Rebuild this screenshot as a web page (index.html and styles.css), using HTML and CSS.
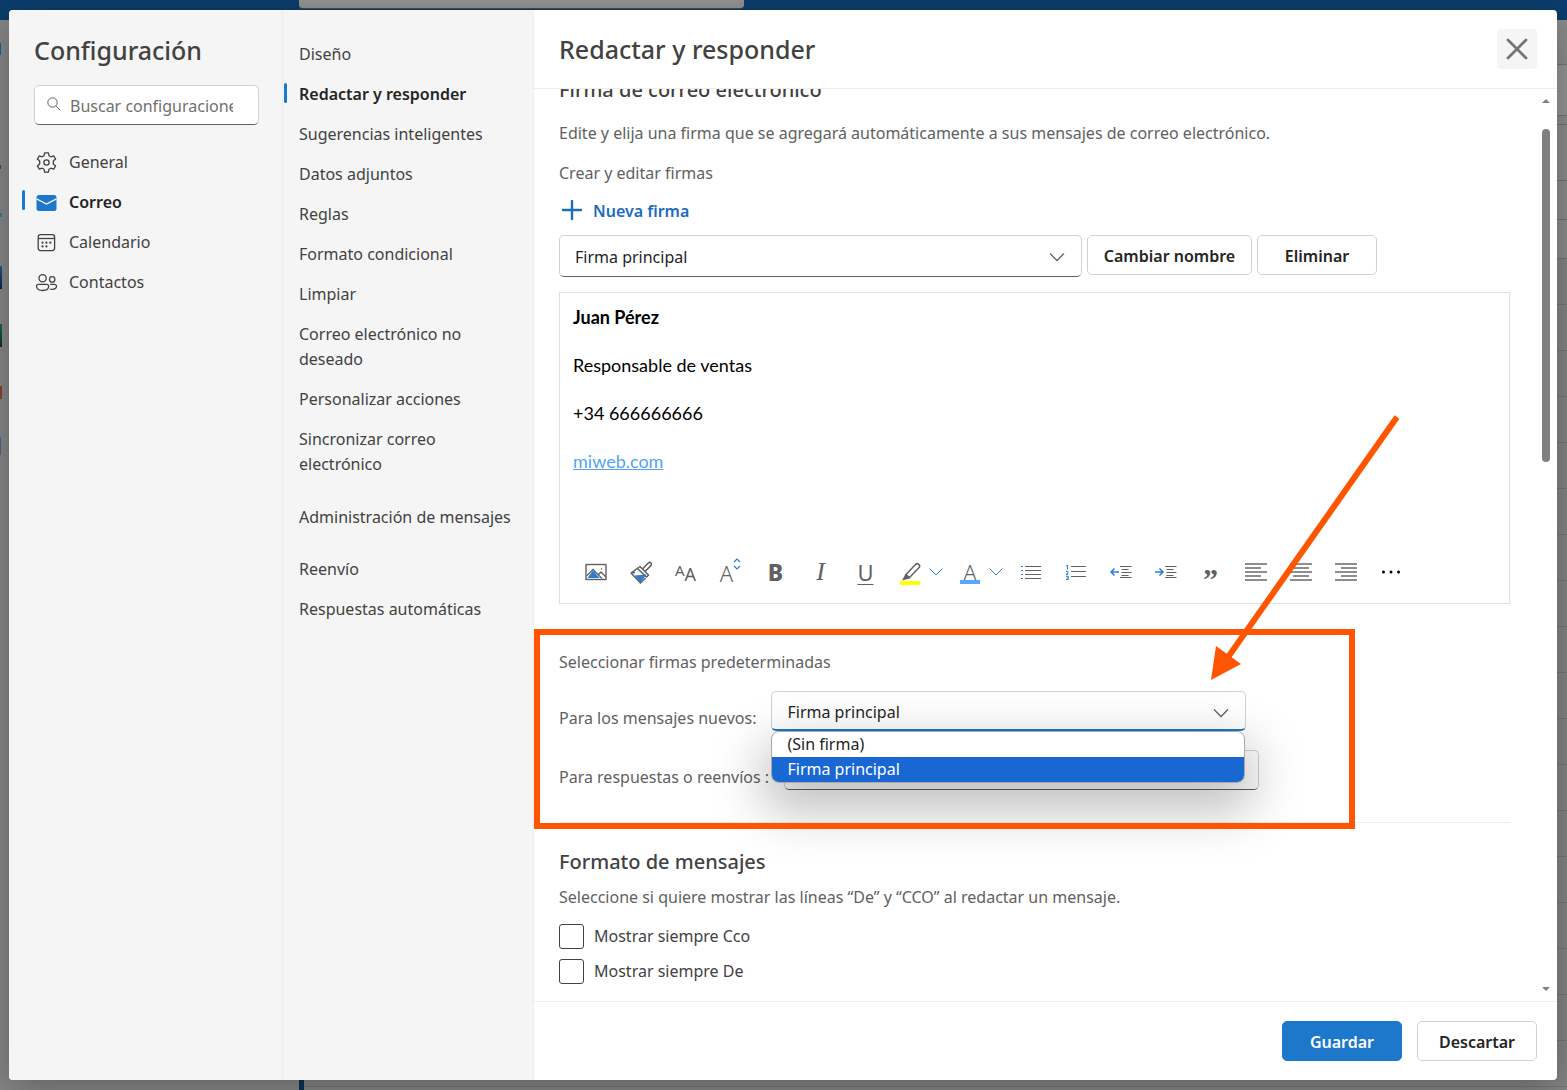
FILE: index.html
```html
<!DOCTYPE html>
<html lang="es">
<head>
<meta charset="utf-8">
<meta name="viewport" content="width=device-width, initial-scale=1">
<title>Configuración</title>
<link rel="stylesheet" href="styles.css">
</head>
<body>
<div class="shell" aria-hidden="true">
  <div class="topbar"><div class="topbar-search"></div></div>
  <div class="shell-body">
    <div class="rail">
      <i class="app mail"></i><i class="app dot"></i><i class="app dot-light"></i><i class="app word"></i><i class="app excel"></i><i class="app ppt"></i><i class="app todo"></i>
    </div>
    <div class="list-edge"><i class="selected"></i></div>
    <div class="reading">
      <div class="band tabs"></div><div class="band ribbon"></div><div class="band gap"></div>
      <div class="band head"></div><div class="band row"></div><div class="band row"></div>
      <div class="messages"></div>
    </div>
  </div>
</div>

<div class="dialog" role="dialog" aria-label="Configuración">
  <aside class="categories">
    <h1 class="title">Configuración</h1>
    <div class="search">
      <svg width="16" height="16" viewBox="0 0 16 16" fill="none" stroke="#616161"><circle cx="6.5" cy="5.5" r="4.7"/><path d="M10 9l4.200 4.200"/></svg>
      <input type="text" aria-label="Buscar configuraciones" placeholder="Buscar configuraciones">
    </div>
    <nav class="category-list" aria-label="Categorías">
      <a class="category" href="#general">
        <svg width="25" height="25" viewBox="0 0 25 25" fill="none" stroke="#424242" stroke-width="1.3" stroke-linejoin="round"><circle cx="12.5" cy="12.5" r="2.6"/><path d="M10.6 2.800h3.800l.6 3 1.800 1 2.900-1 1.900 3.300-2.300 2v2.800l2.300 2-1.900 3.300-2.900-1-1.800 1-.6 3h-3.800l-.6-3-1.800-1-2.900 1-1.900-3.300 2.300-2v-2.800l-2.300-2 1.900-3.300 2.900 1 1.800-1z"/></svg>
        General</a>
      <a class="category active" href="#correo" aria-current="page">
        <svg width="25" height="25" viewBox="0 0 25 25"><rect x="2.5" y="5" width="20" height="16" rx="2.5" fill="#1d78cb"/><path d="M2.5 8.800l10 5.200 10-5.200" fill="none" stroke="#f5f5f5" stroke-width="1.3"/></svg>
        Correo</a>
      <a class="category" href="#calendario">
        <svg width="25" height="25" viewBox="0 0 25 25" fill="none" stroke="#424242" stroke-width="1.3"><rect x="4.2" y="4.600" width="16.4" height="16" rx="2.5"/><path d="M4.2 8.500h16.4"/><g fill="#424242" stroke="none"><circle cx="8.5" cy="12.700" r="1.1"/><circle cx="12.4" cy="12.700" r="1.1"/><circle cx="16.3" cy="12.700" r="1.1"/><circle cx="8.5" cy="16.400" r="1.1"/><circle cx="12.4" cy="16.400" r="1.1"/></g></svg>
        Calendario</a>
      <a class="category" href="#contactos">
        <svg width="25" height="25" viewBox="0 0 25 25" fill="none" stroke="#424242" stroke-width="1.3"><circle cx="8.6" cy="8.300" r="3.6"/><circle cx="18.2" cy="9.400" r="2.7"/><path d="M4.5 14.300h8.200a2 2 0 0 1 2 2c0 2.800-2.600 4.200-6.100 4.200s-6.100-1.400-6.100-4.200a2 2 0 0 1 2-2zM16.200 14.300h4.300a2 2 0 0 1 2 2c0 1.900-1.900 3-4.500 3-.9 0-1.600-.1-2.300-.3"/></svg>
        Contactos</a>
    </nav>
  </aside>

  <nav class="sections" aria-label="Secciones de correo">
    <a class="section-link" href="#diseno">Diseño</a>
    <a class="section-link active" href="#redactar" aria-current="page">Redactar y responder</a>
    <a class="section-link" href="#sugerencias">Sugerencias inteligentes</a>
    <a class="section-link" href="#adjuntos">Datos adjuntos</a>
    <a class="section-link" href="#reglas">Reglas</a>
    <a class="section-link" href="#formato">Formato condicional</a>
    <a class="section-link" href="#limpiar">Limpiar</a>
    <a class="section-link" href="#no-deseado">Correo electrónico no deseado</a>
    <a class="section-link" href="#acciones">Personalizar acciones</a>
    <a class="section-link" href="#sincronizar">Sincronizar correo electrónico</a>
    <a class="section-link spaced" href="#administracion">Administración de mensajes</a>
    <a class="section-link" href="#reenvio">Reenvío</a>
    <a class="section-link" href="#respuestas">Respuestas automáticas</a>
  </nav>

  <main class="panel">
    <header class="panel-head">
      <h2 class="title">Redactar y responder</h2>
      <button class="close" type="button" aria-label="Cerrar"><svg width="24" height="24" viewBox="0 0 24 24" fill="none" stroke="#757575" stroke-width="2.800" stroke-linecap="round"><path d="M3 3l18 18M21 3L3 21"/></svg></button>
    </header>

    <div class="viewport">
      <div class="content">
        <section class="signature">
          <h3 class="subtitle clipped">Firma de correo electrónico</h3>
          <p class="text intro">Edite y elija una firma que se agregará automáticamente a sus mensajes de correo electrónico.</p>
          <p class="text">Crear y editar firmas</p>
          <button class="new" type="button"><svg width="22" height="22" viewBox="0 0 22 22" stroke="#1a6cbd" stroke-width="2.400" stroke-linecap="round"><path d="M11 1v18M2 10h18"/></svg>Nueva firma</button>
          <div class="picker">
            <div class="select-box main-select">
              <select aria-label="Firma"><option>Firma principal</option></select>
              <svg class="chevron" width="16" height="10" viewBox="0 0 16 10"><path d="M1 1.500l7 7 7-7"/></svg>
            </div>
            <button class="button rename" type="button">Cambiar nombre</button>
            <button class="button" type="button">Eliminar</button>
          </div>
          <div class="editor">
            <div class="editor-body">
              <p><b>Juan Pérez</b></p>
              <p>Responsable de ventas</p>
              <p>+34 666666666</p>
              <p><a href="#miweb">miweb.com</a></p>
            </div>
            <div class="toolbar" role="toolbar" aria-label="Formato">
              <button class="tool" type="button" aria-label="Imagen"><svg width="24" height="24" viewBox="0 0 24 24"><rect x="2" y="4.500" width="20" height="15" fill="none" stroke="#616161" stroke-width="1.400"/><path d="M3.500 18l5.500-7.500L15.500 18z" fill="#2b7cd3"/><path d="M3 15.500L9 9.500l9 9M14 15l3-3 5 5" fill="none" stroke="#616161" stroke-width="1.300"/><circle cx="17.500" cy="9" r=".8" fill="#616161"/></svg></button>
              <button class="tool" type="button" aria-label="Copiar formato"><svg width="24" height="24" viewBox="0 0 24 24" fill="none" stroke="#616161" stroke-width="1.500" stroke-linejoin="round"><path d="M5.500 15.500l12-1-6 8z" fill="#2b7cd3" stroke="none"/><path d="M2 13l9-6.500 8.500 8.500-8 8zM8.500 8.500L18 17.500M13.500 9l5.800-6a1.800 1.800 0 0 1 2.600 2.600L16 11.500M2 13l4-.5"/></svg></button>
              <button class="tool fonts" type="button" aria-label="Fuente"><span>A</span><span class="large">A</span></button>
              <button class="tool size" type="button" aria-label="Tamaño de fuente">A<svg width="8" height="12" viewBox="0 0 8 12" fill="none" stroke="#2b7cd3" stroke-width="1.200"><path d="M1 4l3-3 3 3M1 8l3 3 3-3"/></svg></button>
              <button class="tool bold" type="button" aria-label="Negrita">B</button>
              <button class="tool italic" type="button" aria-label="Cursiva">I</button>
              <button class="tool underline" type="button" aria-label="Subrayado">U</button>
              <span class="split">
                <button class="tool" type="button" aria-label="Resaltado"><svg width="24" height="26" viewBox="0 0 24 26"><path d="M2 22h20v4H2z" fill="#ff0"/><path d="M8 15.500L17.500 5.500a2.300 2.300 0 0 1 3.400 3.300L11.500 18.500z" fill="none" stroke="#616161" stroke-width="1.500"/><path d="M7.500 15l4.500 4.500-8 2z" fill="#616161"/></svg></button>
                <button class="more-arrow" type="button" aria-label="Color de resaltado"><svg width="14" height="8" viewBox="0 0 14 8" fill="none" stroke="#2b7cd3"><path d="M.500 .500l6.500 6.500 6.500-6.500"/></svg></button>
              </span>
              <span class="split">
                <button class="tool color" type="button" aria-label="Color de fuente">A</button>
                <button class="more-arrow" type="button" aria-label="Elegir color"><svg width="14" height="8" viewBox="0 0 14 8" fill="none" stroke="#2b7cd3"><path d="M.500 .500l6.500 6.500 6.500-6.500"/></svg></button>
              </span>
              <button class="tool" type="button" aria-label="Viñetas"><svg width="22" height="18" viewBox="0 0 22 18" stroke="#616161" stroke-width="1.200"><path d="M5 3.500h16M5 7.500h16M5 11.500h16M5 15.500h16"/><path d="M1 3.500h2M1 7.500h2M1 11.500h2M1 15.500h2" stroke="#2b7cd3"/></svg></button>
              <button class="tool" type="button" aria-label="Numeración"><svg width="22" height="18" viewBox="0 0 22 18" fill="none" stroke="#616161" stroke-width="1.200"><path d="M6 3.500h15M6 8.500h15M6 13.500h15"/><path d="M1 3l1.500-.7v4M1 8.300h2v1.500l-2 1.700h2.300M1 13.300h2.200v3.200H1M1.500 15h1.700" stroke="#2b7cd3" stroke-width="1"/></svg></button>
              <button class="tool" type="button" aria-label="Reducir sangría"><svg width="22" height="16" viewBox="0 0 22 16" fill="none" stroke="#616161" stroke-width="1.200"><path d="M10 2.500h11.500M11.500 5.500h7M11.500 8.500h10M11.500 11.500h7M10 13.500h11.500"/><path d="M9 8H1M4.500 4.500L1 8l3.500 3.500" stroke="#2b7cd3" stroke-width="1.500"/></svg></button>
              <button class="tool" type="button" aria-label="Aumentar sangría"><svg width="22" height="16" viewBox="0 0 22 16" fill="none" stroke="#616161" stroke-width="1.200"><path d="M10 2.500h11.500M11.500 5.500h7M11.500 8.500h10M11.500 11.500h7M10 13.500h11.500"/><path d="M0 8h8M4.500 4.500L8 8l-3.500 3.500" stroke="#2b7cd3" stroke-width="1.500"/></svg></button>
              <button class="tool quote" type="button" aria-label="Cita">”</button>
              <button class="tool" type="button" aria-label="Alinear a la izquierda"><svg width="22" height="18" viewBox="0 0 22 18" stroke="#6a6a6a" stroke-width="1.300"><path d="M0 1h22M0 5h16M0 9h22M0 13h16M0 17h22"/></svg></button>
              <button class="tool" type="button" aria-label="Centrar"><svg width="22" height="18" viewBox="0 0 22 18" stroke="#6a6a6a" stroke-width="1.300"><path d="M0 1h22M3 5h16M0 9h22M3 13h16M0 17h22"/></svg></button>
              <button class="tool" type="button" aria-label="Alinear a la derecha"><svg width="22" height="18" viewBox="0 0 22 18" stroke="#6a6a6a" stroke-width="1.300"><path d="M0 1h22M6 5h16M0 9h22M6 13h16M0 17h22"/></svg></button>
              <button class="tool" type="button" aria-label="Más opciones"><svg width="20" height="4" viewBox="0 0 20 4"><circle cx="2.500" cy="2" r="1.500"/><circle cx="10" cy="2" r="1.500"/><circle cx="17.500" cy="2" r="1.500"/></svg></button>
            </div>
          </div>
        </section>

        <section class="defaults">
          <p class="text">Seleccionar firmas predeterminadas</p>
          <div class="field">
            <label class="text" for="new-messages">Para los mensajes nuevos:</label>
            <div class="select-box open">
              <select id="new-messages"><option>Firma principal</option></select>
              <svg class="chevron" width="16" height="10" viewBox="0 0 16 10"><path d="M1 1.500l7 7 7-7"/></svg>
              <ul class="options" role="listbox" aria-label="Firmas">
                <li role="option">(Sin firma)</li>
                <li class="chosen" role="option" aria-selected="true">Firma principal</li>
              </ul>
            </div>
          </div>
          <div class="field">
            <label class="text" for="replies">Para respuestas o reenvíos :</label>
            <div class="select-box">
              <select id="replies"><option></option></select>
            </div>
          </div>
          <div class="highlight"></div>
          <svg class="pointer" width="190" height="268" viewBox="0 0 190 268"><path d="M187 4L16 247" stroke="#ff5500" stroke-width="6"/><path d="M6 233l25 18-30 16z" fill="#ff5500"/></svg>
        </section>

        <section class="format">
          <h3 class="subtitle">Formato de mensajes</h3>
          <p class="text">Seleccione si quiere mostrar las líneas “De” y “CCO” al redactar un mensaje.</p>
          <label class="check"><input type="checkbox">Mostrar siempre Cco</label>
          <label class="check"><input type="checkbox">Mostrar siempre De</label>
        </section>
      </div>
      <div class="scrollbar" aria-hidden="true">
        <svg width="8" height="4" viewBox="0 0 8 4"><path d="M4 0l4 4H0z" fill="#808080"/></svg>
        <div class="track"><div class="thumb"></div></div>
        <svg width="8" height="4" viewBox="0 0 8 4"><path d="M0 0h8L4 4z" fill="#808080"/></svg>
      </div>
    </div>

    <footer class="panel-foot">
      <button class="button primary" type="button">Guardar</button>
      <button class="button" type="button">Descartar</button>
    </footer>
  </main>
</div>
</body>
</html>
```

FILE: styles.css
```css
* { box-sizing: border-box; }

body {
  margin: 0;
  height: 100vh;
  overflow: hidden;
  background: #878787;
  color: #424242;
  font: 16px/25px "Noto Sans", "Open Sans", sans-serif;
}

h1, h2, h3, p, ul { margin: 0; padding: 0; }
a { color: inherit; text-decoration: none; }
button, input, select { font: inherit; color: inherit; }
button { cursor: pointer; }
svg { display: block; flex: none; }

/* Dimmed mail app behind the dialog */
.shell { height: 100%; display: flex; flex-direction: column; }
.topbar { height: 20px; flex: none; padding-left: 299px; background: #0a3e6d; }
.topbar-search { width: 445px; height: 9px; border-radius: 0 0 4px 4px; background: #959595; border-bottom: 1px solid #4a4a4a; }
.shell-body { flex: 1; min-height: 0; display: flex; }
.rail { width: 299px; display: flex; flex-direction: column; }
.app { display: block; width: 2px; }
.mail { width: 1px; height: 12px; margin-top: 23px; background: #1b6590; }
.dot { width: 1px; height: 4px; margin-top: 110px; background: #24527f; }
.dot-light { height: 4px; margin-top: 44px; background: #3d7799; }
.word { height: 23px; margin-top: 49px; background: linear-gradient(#205a8c, #0c1f55); }
.excel { height: 23px; margin-top: 35px; background: linear-gradient(#1b6b41, #0f3320); }
.ppt { height: 13px; margin-top: 39px; background: #8d4230; }
.todo { width: 1px; height: 18px; margin-top: 38px; background: #4a6b95; }
.list-edge { width: 5px; display: flex; align-items: flex-end; }
.selected { width: 5px; height: 60px; background: #0a3156; }
.reading { flex: 1; display: flex; flex-direction: column; }
.band { flex: none; border-bottom: 1px solid #757575; background: #8d8d8d; }
.tabs { height: 45px; }
.ribbon { height: 51px; background: #969696; }
.gap { height: 9px; }
.head { height: 56px; }
.row { height: 39px; }
.messages { flex: 1; background: repeating-linear-gradient(#858585 0 45px, #757575 45px 46px); }

.dialog {
  position: absolute;
  inset: 10px 10px 10px 9px;
  display: grid;
  grid-template-columns: 274px 251px minmax(0, 1fr);
  border-radius: 4px;
  background: #fff;
  box-shadow: 0 8px 40px rgba(0, 0, 0, .3);
}

.title { font-size: 25px; line-height: 32px; font-weight: 500; }
.subtitle { font-size: 20px; line-height: 28px; font-weight: 500; }
.text { color: #616161; }

/* Category column */
.categories { padding: 24px 23px 24px 25px; background: #f5f5f5; border-right: 1px solid #ededed; border-radius: 4px 0 0 4px; }
.search { display: flex; align-items: center; gap: 8px; height: 40px; margin-top: 19px; padding: 0 25px 0 11px; background: #fff; border: 1px solid #d1d1d1; border-bottom-color: #616161; border-radius: 5px; }
.search input { flex: 1; min-width: 0; padding: 3px 0 0; border: 0; outline: 0; background: none; }
.search input::placeholder { color: #707070; opacity: 1; }
.category-list { margin-top: 16px; }
.category { position: relative; display: flex; align-items: center; gap: 10px; height: 40px; padding-top: 2px; }
.active { color: #242424; font-weight: 600; }
.active::before { content: ""; position: absolute; top: 9px; height: 20px; width: 3px; border-radius: 2px; background: #1d78cb; }
.category.active::before { left: -12px; }

/* Section column */
.sections { padding: 24px 16px 24px 0; background: #f5f5f5; border-right: 1px solid #ededed; }
.section-link { position: relative; display: block; padding: 8px 0 7px 16px; }
.section-link.active::before { left: 1px; }
.spaced { margin: 13px 0 12px; }

/* Settings panel */
.panel { display: flex; flex-direction: column; min-height: 0; }
.panel-head { display: flex; align-items: center; justify-content: space-between; height: 79px; flex: none; padding: 0 20px 0 25px; border-bottom: 1px solid #ededed; }
.close { display: grid; place-items: center; width: 40px; height: 40px; padding: 0; border: 0; border-radius: 4px; background: #f5f5f5; }
.viewport { flex: 1; min-height: 0; display: flex; overflow: hidden; }
.content { flex: 1; min-width: 0; padding: 0 24px 0 25px; }
.clipped { margin-top: -13px; }
.intro { margin: 17px 0 15px; }
.new { display: flex; align-items: center; gap: 10px; height: 40px; margin: 5px 0 4px; padding: 0 2px; border: 0; background: none; color: #1a6cbd; font-weight: 600; }
.picker { display: flex; align-items: flex-start; gap: 5px; }
.button { height: 40px; min-width: 120px; padding: 3px 8px 0; border: 1px solid #d1d1d1; border-radius: 5px; background: #fff; color: #242424; font-weight: 600; white-space: nowrap; }
.rename { min-width: 165px; }
.primary { border-color: #1d78cb; background: #1d78cb; color: #fff; }

.select-box { position: relative; flex: none; width: 475px; height: 40px; }
.select-box select { appearance: none; width: 100%; height: 100%; padding: 3px 40px 0 15px; border: 1px solid #d1d1d1; border-bottom-color: #616161; border-radius: 5px; background: #fff; color: #242424; outline: 0; }
.main-select { width: 523px; height: 42px; }
.chevron { position: absolute; right: 17px; top: 17px; fill: none; stroke: #616161; stroke-width: 1.3; pointer-events: none; }
.open select { border-bottom: 2px solid #1d78cb; }
.options { position: absolute; z-index: 2; top: 100%; left: 0; width: calc(100% - 1px); overflow: hidden; list-style: none; border: 1px solid #a8a8a8; border-radius: 8px; background: #fff; color: #242424; box-shadow: 0 20px 50px 8px rgba(0, 0, 0, .25); }
.options li { padding-left: 15px; }
.options .chosen { background: #1967d2; color: #fff; }

.editor { margin-top: 15px; height: 312px; display: flex; flex-direction: column; justify-content: space-between; padding: 12px 12px 11px 13px; border: 1px solid #e0e0e0; }
.editor-body { display: grid; gap: 24px; color: #000; font: 18px/24px Lato, "Open Sans", sans-serif; }
.editor-body a { color: #55a2f5; text-decoration: underline; }
.toolbar { display: flex; align-items: center; height: 40px; }
.tool { display: flex; flex: none; align-items: center; justify-content: center; width: 45px; height: 40px; padding: 0; border: 0; background: none; color: #616161; font-size: 22px; line-height: 30px; }
.fonts { font-size: 15px; }
.fonts span { line-height: 20px; padding-bottom: 4px; }
.fonts .large { padding: 4px 0 0; font-size: 18px; }
.size { align-items: flex-start; padding-top: 6px; font-weight: 300; }
.bold { font-weight: 800; font-size: 23px; }
.italic { font-family: "Liberation Serif", serif; font-style: italic; font-size: 26px; }
.underline { text-decoration: underline; text-underline-offset: 3px; text-decoration-thickness: 1px; }
.split { display: flex; align-items: center; width: 60px; padding: 0 4px; }
.split .tool { width: 36px; }
.more-arrow { display: grid; place-items: center; width: 16px; height: 40px; padding: 0; border: 0; background: none; }
.color { position: relative; font-weight: 300; }
.color::after { content: ""; position: absolute; left: 8px; bottom: 8px; width: 20px; height: 4px; background: #55a8fd; }
.quote { padding-top: 14px; font-family: "Liberation Serif", serif; font-size: 30px; font-weight: 700; }

.defaults { position: relative; padding: 46px 0 32px; border-bottom: 1px solid #ededed; }
.field { display: flex; align-items: center; gap: 15px; height: 40px; margin-top: 19px; }
.field label { padding-top: 15px; white-space: nowrap; }
.defaults > .text + .field { margin-top: 16px; }

/* Callout drawn over the default signature fields */
.highlight { position: absolute; z-index: 3; left: -25px; top: 25px; width: 821px; height: 200px; border: 6px solid #ff5500; pointer-events: none; }
.pointer { position: absolute; z-index: 3; left: 651px; top: -191px; pointer-events: none; }

.format { padding-top: 25px; }
.format .text { margin: 9px 0 14px; }
.check { display: flex; align-items: center; gap: 10px; width: max-content; margin-bottom: 10px; }
.check input { appearance: none; width: 25px; height: 25px; margin: 0; border: 1px solid #424242; border-radius: 3px; background: #fff; }

.scrollbar { width: 23px; flex: none; display: flex; flex-direction: column; align-items: center; padding: 10px 0; }
.track { flex: 1; width: 8px; padding: 26px 0; }
.thumb { width: 8px; height: 40%; border-radius: 4px; background: #808080; }

.panel-foot { display: flex; justify-content: flex-end; gap: 15px; flex: none; padding: 19px 20px; border-top: 1px solid #ededed; }
```
